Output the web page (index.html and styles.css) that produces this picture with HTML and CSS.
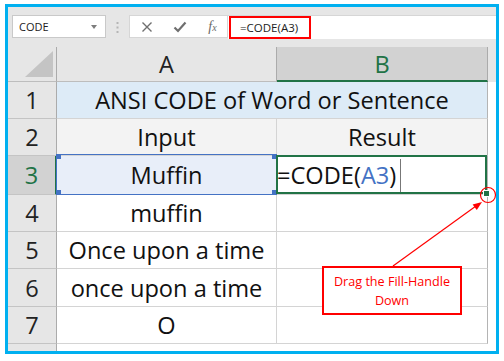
FILE: index.html
```html
<!DOCTYPE html>
<html lang="en">
<head>
    <meta charset="UTF-8" />
    <meta name="viewport" content="width=device-width, initial-scale=1.0"/>
    <title>CODE function</title>
    <link rel="stylesheet" href="styles.css">
</head>
<body>

    <div class="frame">
        <div class="formula-bar">
            <div class="name-box">
                <span>CODE</span>
                <span class="drop"></span>
            </div>
            <div class="grip">
                <svg width="3" height="11" viewBox="0 0 3 11"><rect x="0.5" y="0" width="2" height="2" fill="#b5b5b5"/><rect x="0.5" y="4.5" width="2" height="2" fill="#b5b5b5"/><rect x="0.5" y="9" width="2" height="2" fill="#b5b5b5"/></svg>
            </div>
            <div class="fx-buttons">
                <svg width="12" height="12" viewBox="0 0 12 12"><path d="M1.5 1.5 L10.5 10.5 M10.5 1.5 L1.5 10.5" stroke="#6f6f6f" stroke-width="1.4" fill="none"/></svg>
                <svg width="14" height="12" viewBox="0 0 14 12"><path d="M1.5 6.5 L5 10 L12.5 1.5" stroke="#6f6f6f" stroke-width="2.2" fill="none"/></svg>
                <span class="fx">f<small>x</small></span>
            </div>
            <div class="formula-input">
                <span class="formula-text">=CODE(A3)</span>
            </div>
        </div>

        <div class="sheet">
            <!-- header row -->
            <div class="corner"></div>
            <div class="col-head">A</div>
            <div class="col-head selected">B</div>
            <div class="pad-head"></div>

            <div class="row-head">1</div>
            <div class="cell title">ANSI CODE of Word or Sentence</div>
            <div class="pad"></div>

            <div class="row-head">2</div>
            <div class="cell label">Input</div>
            <div class="cell label last">Result</div>
            <div class="pad"></div>

            <div class="row-head selected">3</div>
            <div class="cell ref">Muffin</div>
            <div class="cell active last">=CODE(<span class="ref-text">A3</span>)<span class="caret"></span></div>
            <div class="pad"></div>

            <div class="row-head">4</div>
            <div class="cell">muffin</div>
            <div class="cell last"></div>
            <div class="pad"></div>

            <div class="row-head">5</div>
            <div class="cell">Once upon a time</div>
            <div class="cell last"></div>
            <div class="pad"></div>

            <div class="row-head">6</div>
            <div class="cell">once upon a time</div>
            <div class="cell last"></div>
            <div class="pad"></div>

            <div class="row-head">7</div>
            <div class="cell">O</div>
            <div class="cell last"></div>
            <div class="pad"></div>

            <div class="row-head empty"></div>
            <div class="pad"></div>
            <div class="pad"></div>
            <div class="pad"></div>
        </div>

        <!-- annotation -->
        <svg class="marks" width="504" height="361" viewBox="0 0 504 361">
            <circle cx="488" cy="195" r="7.5" fill="none" stroke="#ff0000" stroke-width="1.2"/>
            <line x1="393" y1="266" x2="476" y2="206" stroke="#ff0000" stroke-width="1.2"/>
            <polygon points="482,202 476.8,210.1 472.6,204.5" fill="#ff0000"/>
        </svg>
        <div class="callout">
            <span>Drag the Fill-Handle</span>
            <span>Down</span>
        </div>
    </div>

</body>
</html>
```

FILE: styles.css
```css
body {
    margin: 0;
    background: #fff;
    font-family: "Open Sans", "Liberation Sans", sans-serif;
}

.frame {
    position: relative;
    display: flex;
    flex-direction: column;
    width: 494px;
    height: 350px;
    margin: 4px 0 0 5px;
    padding-top: 8px;
    box-sizing: border-box;
    border: 3px solid #00b0f0;
    background: #e6e6e6;
}

/* formula bar */
.formula-bar {
    display: flex;
    height: 24px;
}

.name-box {
    display: flex;
    align-items: center;
    justify-content: space-between;
    width: 94px;
    height: 23px;
    margin-left: 4px;
    padding: 0 8px 0 6px;
    box-sizing: border-box;
    background: #fff;
    border: 1px solid #c9c9c9;
    font-size: 11px;
    color: #222;
}

.drop {
    width: 0;
    height: 0;
    border-left: 3.5px solid transparent;
    border-right: 3.5px solid transparent;
    border-top: 4px solid #7d7d7d;
}

.grip {
    display: flex;
    justify-content: center;
    align-items: center;
    width: 23px;
}

.fx-buttons {
    display: grid;
    grid-template-columns: 33px 33px 33px;
    justify-items: center;
    align-items: center;
    width: 99px;
    height: 23px;
    box-sizing: border-box;
    background: #fff;
    border: 1px solid #d6d6d6;
}

.fx {
    font-family: "Liberation Serif", serif;
    font-style: italic;
    font-size: 14px;
    color: #6a6a6a;
}

.fx small {
    font-size: 10px;
}

.formula-input {
    flex: 1;
    display: flex;
    padding-left: 1px;
    background: #fff;
    border-top: 1px solid #d6d6d6;
}

.formula-text {
    display: flex;
    align-items: center;
    width: 82px;
    padding-left: 9px;
    box-sizing: border-box;
    border: 2px solid #ff0000;
    font-size: 11.5px;
    color: #222;
}

/* worksheet */
.sheet {
    flex: 1;
    display: grid;
    grid-template-columns: 49px 220px 211px 1fr;
    grid-template-rows: 35px 37px 37px 39px 37px 37px 38px 37px 1fr;
    margin-top: 8px;
    font-size: 23.6px;
    color: #111;
}

.sheet > div {
    display: flex;
    align-items: center;
    justify-content: center;
    box-sizing: border-box;
}

.corner {
    justify-content: flex-end !important;
    align-items: flex-end !important;
    padding: 0 3px 4px 0;
    border-right: 1px solid #ababab;
    border-bottom: 1px solid #bdbdbd;
}

.corner::after {
    content: "";
    width: 0;
    height: 0;
    border-left: 28px solid transparent;
    border-bottom: 26px solid #c4c4c4;
}

.col-head {
    border-right: 1px solid #ababab;
    border-bottom: 1px solid #bdbdbd;
    color: #222;
}

.col-head.selected {
    background: #d2d2d2;
    color: #217346;
    border-bottom: 2px solid #217346;
}

.row-head {
    border-right: 1px solid #ababab;
    border-bottom: 1px solid #c4c4c4;
    color: #222;
}

.row-head.selected {
    background: #d2d2d2;
    color: #217346;
    border-right: 2px solid #217346;
}

.row-head.empty {
    border-bottom: none;
}

.cell {
    background: #fff;
    border-right: 1px solid #d4d4d4;
    border-bottom: 1px solid #d4d4d4;
}

.cell.last {
    border-right-color: #b4b4b4;
}

.cell.title {
    grid-column: span 2;
    background: #ddebf7;
    border-right-color: #b4b4b4;
}

.cell.label {
    background: #f3f3f3;
}

.pad {
    background: #fff;
}

/* referenced cell A3 */
.cell.ref {
    position: relative;
    background: #e8eef9;
}

.cell.ref::before {
    content: "";
    position: absolute;
    top: -2px;
    left: -2px;
    right: -2px;
    bottom: -1px;
    border: 1px solid #4472c4;
    background:
        linear-gradient(#4472c4, #4472c4) left top / 4px 4px no-repeat,
        linear-gradient(#4472c4, #4472c4) right top / 4px 4px no-repeat,
        linear-gradient(#4472c4, #4472c4) left bottom / 4px 4px no-repeat,
        linear-gradient(#4472c4, #4472c4) right bottom / 4px 4px no-repeat;
    margin: 0 1px;
}

/* active cell B3 */
.cell.active {
    position: relative;
    justify-content: flex-start;
    z-index: 2;
}

.cell.active::before {
    content: "";
    position: absolute;
    top: -1px;
    left: -1px;
    right: 0;
    bottom: 0;
    border: 2px solid #217346;
}

.cell.active::after {
    content: "";
    position: absolute;
    right: -3px;
    bottom: -3px;
    width: 5px;
    height: 5px;
    background: #217346;
    border: 1px solid #fff;
}

.ref-text {
    color: #4472c4;
}

.caret {
    display: inline-block;
    width: 1px;
    height: 33px;
    margin-left: 4px;
    background: #777;
}

/* annotation */
.marks {
    position: absolute;
    left: -8px;
    top: -7px;
    z-index: 5;
    pointer-events: none;
}

.callout {
    position: absolute;
    left: 314px;
    top: 259px;
    display: flex;
    flex-direction: column;
    align-items: center;
    justify-content: center;
    width: 140px;
    height: 49px;
    box-sizing: border-box;
    background: #fff;
    border: 2px solid #ff0000;
    font-size: 12.6px;
    line-height: 19px;
    color: #ff0000;
    z-index: 6;
}
```
